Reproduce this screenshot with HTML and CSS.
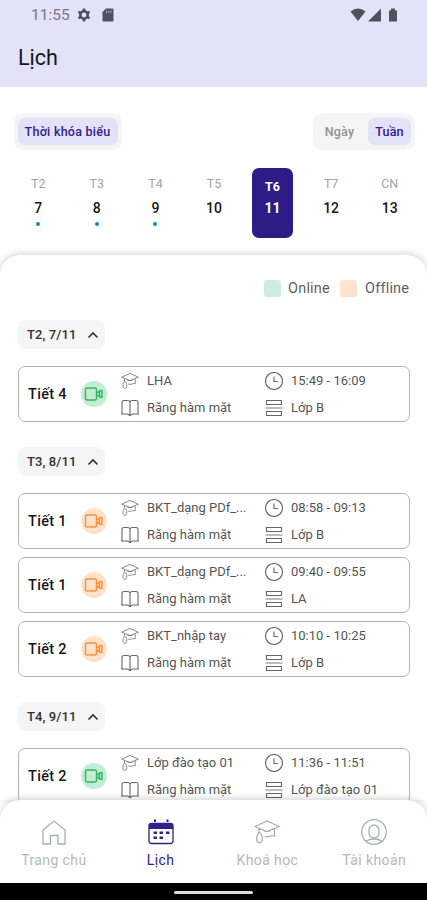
FILE: index.html
```html
<!DOCTYPE html>
<html lang="vi">
<head>
<meta charset="utf-8">
<meta name="viewport" content="width=device-width, initial-scale=1">
<title>Lịch</title>
<link rel="stylesheet" href="styles.css">
</head>
<body>
<svg class="defs" width="0" height="0">
  <symbol id="cap" viewBox="0 0 26 24"><path d="M1 6.500 L13 1 25 6.500 13 11.500Z M5 8.500V12.500 M20.500 8.500V16C18 14.500 15 18 10.500 16.500 M9 10.500Q13 12.500 17 10.500 M5.500 12.500C3 13.500 2.500 17 2.800 21Q5.500 25 8.200 21C8.500 17 8 13.500 5.500 12.500Z"/></symbol>
  <symbol id="book" viewBox="0 0 18 18"><path d="M1 15.500V3Q1 1.500 3 1.500H6.500Q9 1.500 9 3.500Q9 1.500 11.500 1.500H15Q17 1.500 17 3V15.500M9 3.500V16M0 15H6.500L9 16.500 11.500 15H18"/></symbol>
  <symbol id="clock" viewBox="0 0 18 18"><circle cx="9" cy="9" r="8.500"/><path d="M9 4.500V9.500H13"/></symbol>
  <symbol id="rows" viewBox="0 0 18 18"><path d="M1.500 1.500H16.500V5.500H1.500ZM1.500 12.500H16.500V16.500H1.500Z"/><path class="mid" d="M.5 9H17.500"/></symbol>
  <symbol id="cam" viewBox="0 0 20 16"><rect x="1.500" y="2" width="11" height="12" rx="1.500"/><path d="M12.500 6.500H14L15.500 5 18 4.500V11.500L15.500 11 14 9.500H12.500M15.500 5V11"/></symbol>
  <symbol id="up" viewBox="0 0 12 8"><path d="M1.500 6.500 6 2 10.500 6.500"/></symbol>
</svg>
<div class="screen">
  <header class="header">
    <div class="status">
      <span class="time">11:55</span>
      <svg class="gear" width="14" height="14" viewBox="0 0 14 14"><circle cx="7" cy="7" r="3.700"/><path d="M7 .5V3M7 11V13.500M1.400 3.750 3.500 5M10.500 9 12.600 10.250M1.400 10.250 3.500 9M10.500 5 12.600 3.750"/></svg>
      <svg class="sd" width="12" height="14" viewBox="0 0 12 14"><path d="M4 .5H10.500Q11.500.5 11.500 1.500V12.500Q11.500 13.500 10.500 13.500H1.500Q.5 13.500.5 12.500V4Z"/><path class="slots" d="M4.500 2.500V5M6.800 2.500V5M9 2.500V5"/></svg>
      <svg class="signal" width="48" height="14" viewBox="0 0 48 14"><path d="M.5 3.500Q8 -2.500 15.500 3.500L8 13Z M31 .5V13.500H18ZM39 2.500H41V.5H45V2.500H47V13.500H39Z"/></svg>
    </div>
    <h1 class="title">Lịch</h1>
  </header>
  <section class="controls">
    <div class="switch"><span class="tab tab-wide active">Thời khóa biểu</span></div>
    <div class="switch"><span class="tab tab-day">Ngày</span><span class="tab tab-week active">Tuần</span></div>
  </section>
  <section class="week">
    <div class="day has"><span>T2</span><b>7</b></div>
    <div class="day has"><span>T3</span><b>8</b></div>
    <div class="day has"><span>T4</span><b>9</b></div>
    <div class="day"><span>T5</span><b>10</b></div>
    <div class="day selected"><span>T6</span><b>11</b></div>
    <div class="day"><span>T7</span><b>12</b></div>
    <div class="day"><span>CN</span><b>13</b></div>
  </section>
  <main class="sheet">
    <div class="legend"><i class="swatch online"></i><span class="l-on">Online</span><i class="swatch offline"></i><span class="l-off">Offline</span></div>
    <section class="group">
      <div class="chip"><span>T2, 7/11</span><svg><use href="#up"/></svg></div>
      <article class="card"><strong>Tiết 4</strong><span class="badge online"><svg><use href="#cam"/></svg></span>
        <div class="info"><svg><use href="#cap"/></svg><span>LHA</span><svg><use href="#clock"/></svg><span>15:49 - 16:09</span><svg><use href="#book"/></svg><span>Răng hàm mặt</span><svg><use href="#rows"/></svg><span>Lớp B</span></div></article>
    </section>
    <section class="group">
      <div class="chip"><span>T3, 8/11</span><svg><use href="#up"/></svg></div>
      <article class="card"><strong>Tiết 1</strong><span class="badge offline"><svg><use href="#cam"/></svg></span>
        <div class="info"><svg><use href="#cap"/></svg><span>BKT_dạng PDf_...</span><svg><use href="#clock"/></svg><span>08:58 - 09:13</span><svg><use href="#book"/></svg><span>Răng hàm mặt</span><svg><use href="#rows"/></svg><span>Lớp B</span></div></article>
      <article class="card"><strong>Tiết 1</strong><span class="badge offline"><svg><use href="#cam"/></svg></span>
        <div class="info"><svg><use href="#cap"/></svg><span>BKT_dạng PDf_...</span><svg><use href="#clock"/></svg><span>09:40 - 09:55</span><svg><use href="#book"/></svg><span>Răng hàm mặt</span><svg><use href="#rows"/></svg><span>LA</span></div></article>
      <article class="card"><strong>Tiết 2</strong><span class="badge offline"><svg><use href="#cam"/></svg></span>
        <div class="info"><svg><use href="#cap"/></svg><span>BKT_nhập tay</span><svg><use href="#clock"/></svg><span>10:10 - 10:25</span><svg><use href="#book"/></svg><span>Răng hàm mặt</span><svg><use href="#rows"/></svg><span>Lớp B</span></div></article>
    </section>
    <section class="group">
      <div class="chip"><span>T4, 9/11</span><svg><use href="#up"/></svg></div>
      <article class="card"><strong>Tiết 2</strong><span class="badge online"><svg><use href="#cam"/></svg></span>
        <div class="info"><svg><use href="#cap"/></svg><span>Lớp đào tạo 01</span><svg><use href="#clock"/></svg><span>11:36 - 11:51</span><svg><use href="#book"/></svg><span>Răng hàm mặt</span><svg><use href="#rows"/></svg><span>Lớp đào tạo 01</span></div></article>
    </section>
  </main>
  <nav class="nav">
    <a class="item"><svg viewBox="0 0 26 26"><path d="M2 11 13 2 24 11V25H17V16.500H9.500V25H2Z"/></svg><span>Trang chủ</span></a>
    <a class="item current"><svg viewBox="0 0 26 26"><rect x="1" y="4.500" width="24" height="20" rx="2.500"/><path class="solid" d="M1 5H25V10H1ZM6 .5H8V3H6ZM18.500 .5H20.500V3H18.500ZM5.500 12.500H9V15H5.500ZM11.500 12.500H15V15H11.500ZM18 12.500H21.500V15H18ZM5.500 17.500H9V20H5.500ZM11.500 17.500H15V20H11.500Z"/></svg><span>Lịch</span></a>
    <a class="item"><svg viewBox="0 0 26 26"><use href="#cap" y="1" width="26" height="24"/></svg><span>Khoá học</span></a>
    <a class="item"><svg viewBox="0 0 26 26"><circle cx="13" cy="13" r="12.300"/><rect x="8" y="6" width="10" height="13" rx="5"/><path d="M5 22Q13 18 21 22"/></svg><span>Tài khoản</span></a>
  </nav>
  <footer class="home"><i></i></footer>
</div>
</body>
</html>
```
FILE: styles.css
```css
* { box-sizing: border-box; }
body { margin: 0; font-family: Roboto, "Liberation Sans", sans-serif; background: #fff; color: #222; }
svg { fill: none; stroke: currentColor; overflow: visible; flex: none; }
.defs { position: absolute; }
.screen { height: 900px; overflow: hidden; display: flex; flex-direction: column; }
.header { height: 87px; flex: none; background: #e4e2f8; }
.status { display: flex; align-items: center; height: 29px; padding: 0 29px 0 31px; color: #50505c; }
.time { width: 46px; font-size: 15.500px; color: #777785; }
.gear { stroke-width: 2.6; }
.sd { margin-left: 11px; fill: currentColor; stroke: none; }
.slots { stroke: #aaa9b9; stroke-width: 1; }
.signal { margin-left: auto; fill: currentColor; stroke: none; }
.title { margin: 16px 0 0 18px; font-size: 21.500px; line-height: 26px; font-weight: 400; color: #171622; }

.controls { display: flex; justify-content: space-between; padding: 26px 12px 0 14px; height: 81px; }
.switch { display: flex; height: 37px; padding: 5px 4px; background: #f5f5f6; border-radius: 9px; }
.tab { display: flex; justify-content: center; align-items: center; height: 27px; border-radius: 7px; font-size: 12.500px; font-weight: 500; color: #919191; }
.tab.active { background: #e4e2f8; color: #30218b; }
.tab-wide { width: 100px; padding-right: 1px; letter-spacing: .25px; }
.tab-day { width: 51px; padding-right: 6px; letter-spacing: .2px; }
.tab-week { width: 43px; letter-spacing: .2px; }

.week { display: grid; grid-template-columns: repeat(7, 1fr); padding: 0 8px 0 9px; height: 87px; flex: none; }
.day { display: flex; flex-direction: column; align-items: center; justify-self: center; width: 41px; height: 70px; padding-top: 8px; border-radius: 7px; }
.day span { font-size: 12.500px; line-height: 16px; color: #a4a4a4; }
.day b { margin-top: 8px; font-size: 14px; line-height: 16px; font-weight: 500; color: #171717; }
.day.has::after { content: ""; width: 4px; height: 4px; margin-top: 6px; border-radius: 50%; background: #1784dc; }
.day.selected { background: #2d1c87; padding-top: 11px; }
.day.selected span { color: #fff; font-weight: 700; }
.day.selected b { color: #fff; font-weight: 700; margin-top: 5px; }

.sheet { flex: 1; min-height: 0; overflow: visible; padding: 24px 17px 0 18px; border-radius: 20px 20px 0 0; box-shadow: 0 -2px 6px rgba(0,0,0,.16); background: #fff; }
.legend { display: flex; justify-content: flex-end; align-items: center; height: 19px; font-size: 14.500px; color: #606060; }
.swatch { width: 17px; height: 17px; border-radius: 3px; }
.swatch.online { background: #cdeeda; }
.swatch.offline { background: #ffe3cd; margin-left: 9px; }
.l-on { margin-left: 7px; width: 43px; letter-spacing: .2px; }
.l-off { margin-left: 8px; width: 45px; letter-spacing: .2px; }
.group { margin-top: 22px; display: flex; flex-direction: column; }
.group + .group { margin-top: 25px; }
.chip { display: flex; align-items: center; width: 87px; height: 29px; padding: 0 6px 0 9px; margin-bottom: 17px; border-radius: 8px; background: #f5f5f5; font-size: 13px; font-weight: 500; color: #303030; }
.chip span { width: 60px; letter-spacing: .1px; white-space: nowrap; }
.chip svg { width: 12px; height: 8px; stroke-width: 1.6; }
.card { display: flex; align-items: center; height: 56px; padding-left: 9px; border: 1px solid #b5b5b5; border-radius: 7px; background: #fff; }
.card + .card { margin-top: 8px; }
.card strong { width: 53px; font-size: 14.500px; font-weight: 500; letter-spacing: .3px; color: #171717; white-space: nowrap; }
.badge { display: grid; place-items: center; width: 26px; height: 26px; border-radius: 50%; }
.badge.online { background: #c1edd0; color: #3caf6a; }
.badge.offline { background: #ffe1ca; color: #f59145; }
.badge svg { width: 20px; height: 16px; stroke-width: 1.4; }
.info { display: grid; grid-template-columns: 18px 110px 18px 1fr; grid-template-rows: 27px 27px; column-gap: 8px; align-items: center; margin-left: 14px; flex: 1; font-size: 13px; color: #555; white-space: nowrap; }
.info svg { width: 18px; height: 18px; stroke-width: 1.1; color: #666; }
.mid { color: #aaa; stroke-width: 1.5; }

.nav { display: grid; grid-template-columns: repeat(4, 1fr); height: 83px; flex: none; padding-top: 19px; position: relative; background: #fff; border-radius: 20px 20px 0 0; box-shadow: 0 -2px 6px rgba(0,0,0,.16); }
.item { display: flex; flex-direction: column; align-items: center; padding-left: 1px; color: #aaafb0; font-size: 14px; }
.item svg { width: 26px; height: 26px; stroke-width: 1.3; }
.item span { margin-top: 6px; line-height: 18px; color: #b4b8b8; letter-spacing: .4px; }
.item.current, .item.current span { color: #30218b; }
.solid { fill: currentColor; stroke: none; }
.home { display: flex; justify-content: center; height: 17px; flex: none; padding-top: 8px; background: #000; position: relative; }
.home i { width: 79px; height: 3px; border-radius: 2px; background: #ddd; }
```
